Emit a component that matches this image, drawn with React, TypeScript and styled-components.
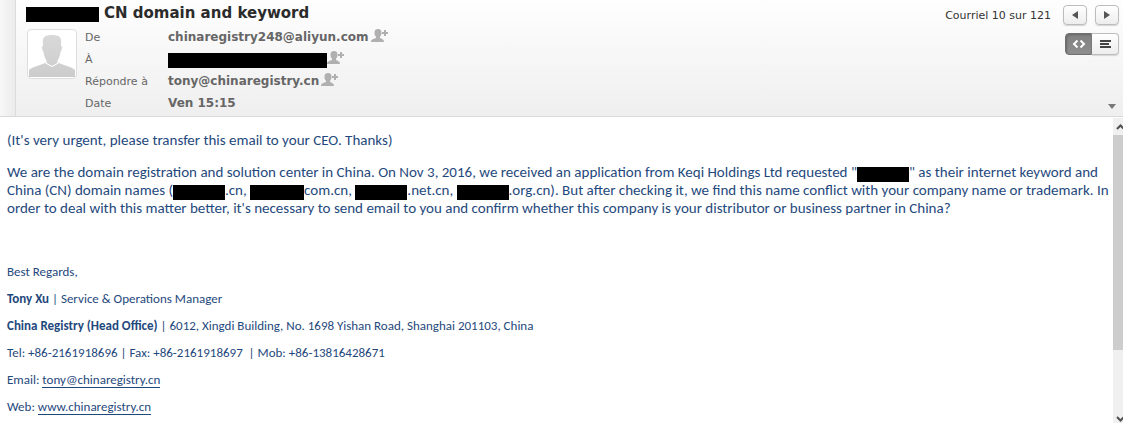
import React from "react";
import styled, { createGlobalStyle } from "styled-components";

const Global = createGlobalStyle`
  * { box-sizing: border-box; }
  html, body, #root { height: 100%; }
  body { margin: 0; background: #fff; overflow: hidden; }
`;

const Page = styled.div`
  display: flex;
  flex-direction: column;
  height: 100%;
`;

const Header = styled.header`
  display: flex;
  border-bottom: 1px solid #d9d9d9;
  background: linear-gradient(#fefefe, #efefef);
  font-family: Verdana, "DejaVu Sans", sans-serif;
`;

const Gutter = styled.div`
  width: 16px;
  flex: none;
  border-right: 1px solid #dcdcdc;
  background: linear-gradient(to right, #f8f8f8, #ebebeb);
`;

const Summary = styled.div`
  flex: 1;
  min-width: 0;
  padding: 4px 0 2px 10px;
`;

const Subject = styled.h1`
  display: flex;
  align-items: center;
  gap: 5px;
  margin: 0;
  font-size: 15px;
  line-height: 18px;
  color: #2b2b2b;
  white-space: nowrap;
`;

const Redacted = styled.span<{ $w: number }>`
  display: inline-block;
  vertical-align: -3px;
  width: ${(p) => p.$w}px;
  height: 15px;
  margin-bottom: -2px;
  background: #000;
`;

const Details = styled.div`
  display: flex;
  gap: 8px;
  padding: 4px 0 0 1px;
`;

const Avatar = styled.div`
  flex: none;
  width: 50px;
  height: 50px;
  margin-top: 3px;
  padding: 1px;
  border: 1px solid #dedede;
  border-radius: 4px;
  background: #fff;
  svg { display: block; }
`;

const Fields = styled.dl`
  display: grid;
  grid-template-columns: 83px auto;
  grid-auto-rows: 22px;
  align-items: center;
  margin: 0;
  font-size: 11px;
  color: #666;
`;

const Label = styled.dt``;

const Value = styled.dd<{ $gap?: number }>`
  display: flex;
  align-items: center;
  gap: ${(p) => p.$gap ?? 2}px;
  margin: 0;
  font-size: 12px;
  font-weight: bold;
`;

const AddContact = styled.button`
  padding: 0;
  border: 0;
  background: none;
  height: 18px;
  svg { display: block; }
`;

const Tools = styled.div`
  display: flex;
  flex-direction: column;
  align-items: flex-end;
  padding: 5px 4px 7px 0;
`;

const Pager = styled.nav`
  display: flex;
  align-items: center;
  gap: 8px;
  font-size: 11px;
  color: #333;
`;

const Count = styled.span`
  margin-right: 4px;
`;

const ToolButton = styled.button`
  display: flex;
  align-items: center;
  justify-content: center;
  width: 24px;
  height: 20px;
  padding: 0;
  border: 1px solid #bdbdbd;
  border-radius: 4px;
  background: linear-gradient(#fff, #ededed);
  box-shadow: 0 1px 1px #d4d4d4;
`;

const Switcher = styled.div`
  display: flex;
  margin-top: 8px;
`;

const ViewButton = styled(ToolButton)<{ $on?: boolean }>`
  width: 27px;
  height: 22px;
  border-radius: ${(p) => (p.$on ? "4px 0 0 4px" : "0 4px 4px 0")};
  ${(p) => p.$on
    ? "background: linear-gradient(#808080, #8e8e8e); border-color: #707070; box-shadow: inset 1px 1px 2px #666;"
    : "border-left: 0;"}
`;

const Expand = styled.button`
  margin: auto 3px 0 0;
  padding: 0;
  border: 0;
  background: none;
  svg { display: block; }
`;

const Content = styled.div`
  display: flex;
  flex: 1;
  min-height: 0;
`;

const Message = styled.article`
  flex: 1;
  min-width: 0;
  overflow: hidden;
  padding: 14px 0 0 7px;
  font-family: Calibri, Carlito, Lato, sans-serif;
  color: #1f497d;
`;

const Paragraph = styled.p`
  margin: 0 0 14px;
  font-size: 15px;
  line-height: 18px;
`;

const TextLine = styled.span`
  display: block;
`;

const Signature = styled.footer`
  padding-top: 27px;
`;

const SignLine = styled.p`
  margin: 0;
  font-size: 13px;
  line-height: 27px;
  white-space: pre-wrap;
`;

const Link = styled.a`
  color: inherit;
  text-decoration: none;
  border-bottom: 1px solid currentColor;
`;

const ScrollRail = styled.div`
  display: flex;
  flex-direction: column;
  flex: none;
  width: 10px;
  margin-top: 1px;
  background: #f0f0f0;
  overflow: hidden;
`;

const ScrollButton = styled.button<{ $end?: boolean }>`
  width: 10px;
  height: 17px;
  margin-top: ${(p) => (p.$end ? "auto" : "0")};
  padding: 0;
  border: 0;
  background: none;
  svg { display: block; }
`;

const Thumb = styled.div`
  height: 215px;
  background: #cdcdcd;
`;

const PersonPlus = ({ who }: { who: string }) => (
  <AddContact aria-label={`Ajouter ${who}`}>
    <svg width="18" height="18" viewBox="0 0 18 18" fill="#b0b0b0">
      <path d="M3.500 5C3.500 2 4.500 1 7 1s3.500 1 3.500 4c0 1.600-.6 3-1.500 3.800V10c1.700.8 4 1.200 4 4H0c0-2.800 3-3.200 5-4V8.800C4.100 8 3.500 6.600 3.500 5z" />
      <path d="M13 2h2v2h2v2h-2v2h-2V6h-2V4h2z" />
    </svg>
  </AddContact>
);

export default function App() {
  return (
    <Page>
      <Global />
      <Header>
        <Gutter />
        <Summary>
          <Subject>
            <Redacted $w={73} />
            CN domain and keyword
          </Subject>
          <Details>
            <Avatar>
              <svg width="46" height="46" viewBox="0 0 46 46">
                <defs>
                  <linearGradient id="person" gradientUnits="userSpaceOnUse" x1="0" y1="3" x2="0" y2="46">
                    <stop offset="0" stopColor="#d9d9d9" />
                    <stop offset="1" stopColor="#cccccc" />
                  </linearGradient>
                </defs>
                <path fill="url(#person)" d="M0 46v-7c4-3.500 10-4.500 16-7l7 4 7-4c6 2.500 12 3.500 16 7v7z" />
                <path fill="url(#person)" stroke="#fff" d="M13.500 15C12.500 6 15 3.500 23 3.500S33.500 6 32.500 15c1.500 0 1 4-.5 6-.5 4-1.500 6-3 8.500V32L23 35.500 17 32v-2.500c-1.500-2.500-2.500-4.500-3-8.500-1.500-2-2-6-.5-6z" />
              </svg>
            </Avatar>
            <Fields>
              <Label>De</Label>
              <Value>chinaregistry248@aliyun.com <PersonPlus who="l'expéditeur" /></Value>
              <Label>À</Label>
              <Value $gap={0}><Redacted $w={159} /><PersonPlus who="le destinataire" /></Value>
              <Label>Répondre à</Label>
              <Value>tony@chinaregistry.cn <PersonPlus who="l'adresse de réponse" /></Value>
              <Label>Date</Label>
              <Value>Ven 15:15</Value>
            </Fields>
          </Details>
        </Summary>
        <Tools>
          <Pager>
            <Count>Courriel 10 sur 121</Count>
            <ToolButton aria-label="Courriel précédent">
              <svg width="8" height="8" viewBox="0 0 8 8"><path fill="#555" d="M7 0v8L1 4z" /></svg>
            </ToolButton>
            <ToolButton aria-label="Courriel suivant">
              <svg width="8" height="8" viewBox="0 0 8 8"><path fill="#555" d="M1 0v8l6-4z" /></svg>
            </ToolButton>
          </Pager>
          <Switcher>
            <ViewButton $on aria-label="Vue HTML" aria-pressed>
              <svg width="14" height="8" viewBox="0 0 14 8" fill="none" stroke="#fff" strokeWidth="2"><path d="M5.500 .5L2 4l3.500 3.500M8.500 .5L12 4 8.500 7.500" /></svg>
            </ViewButton>
            <ViewButton aria-label="Vue texte" aria-pressed={false}>
              <svg width="11" height="8" viewBox="0 0 11 8" fill="#444"><path d="M0 0h11v2H0zM0 3h9v2H0zM0 6h11v2H0z" /></svg>
            </ViewButton>
          </Switcher>
          <Expand aria-label="Plus de détails">
            <svg width="8" height="5" viewBox="0 0 8 5"><path fill="#777" d="M0 0h8L4 5z" /></svg>
          </Expand>
        </Tools>
      </Header>
      <Content>
        <Message>
          <Paragraph>(It's very urgent, please transfer this email to your CEO. Thanks)</Paragraph>
          <Paragraph>
            <TextLine>
              We are the domain registration and solution center in China. On Nov 3, 2016, we received an application from Keqi Holdings Ltd requested "<Redacted $w={52} />" as their internet keyword and
            </TextLine>
            <TextLine>
              China (CN) domain names (<Redacted $w={52} />.cn, <Redacted $w={54} />com.cn, <Redacted $w={52} />.net.cn, <Redacted $w={52} />.org.cn). But after checking it, we find this name conflict with your company name or trademark. In
            </TextLine>
            <TextLine>
              order to deal with this matter better, it's necessary to send email to you and confirm whether this company is your distributor or business partner in China?
            </TextLine>
          </Paragraph>
          <Signature>
            <SignLine>Best Regards,</SignLine>
            <SignLine><b>Tony Xu</b> | Service &amp; Operations Manager</SignLine>
            <SignLine><b>China Registry (Head Office)</b> | 6012, Xingdi Building, No. 1698 Yishan Road, Shanghai 201103, China</SignLine>
            <SignLine>Tel: +86-2161918696 | Fax: +86-2161918697  | Mob: +86-13816428671</SignLine>
            <SignLine>Email: <Link href="mailto:tony@chinaregistry.cn">tony@chinaregistry.cn</Link></SignLine>
            <SignLine>Web: <Link href="http://www.chinaregistry.cn">www.chinaregistry.cn</Link></SignLine>
          </Signature>
        </Message>
        <ScrollRail>
          <ScrollButton aria-label="Défiler vers le haut">
            <svg width="10" height="17" viewBox="0 0 10 17" fill="none" stroke="#505050" strokeWidth="2"><path d="M4 11l3.500-3.500L11 11" /></svg>
          </ScrollButton>
          <Thumb />
          <ScrollButton $end aria-label="Défiler vers le bas">
            <svg width="10" height="17" viewBox="0 0 10 17" fill="none" stroke="#505050" strokeWidth="2"><path d="M4 11l3.500 3.500L11 11" /></svg>
          </ScrollButton>
        </ScrollRail>
      </Content>
    </Page>
  );
}
